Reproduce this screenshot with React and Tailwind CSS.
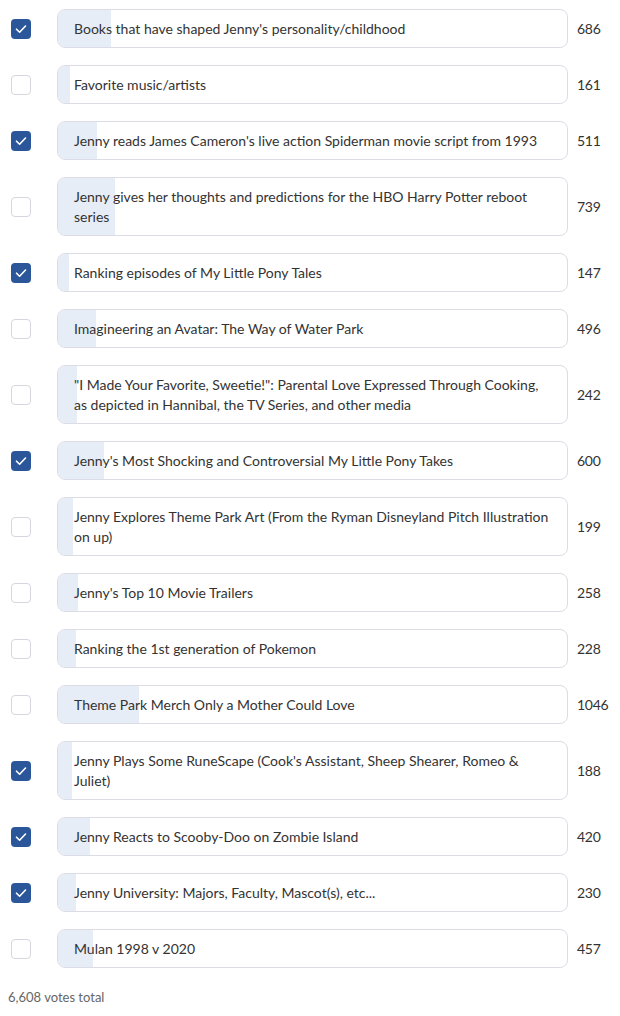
import React from "react";

const items = [
  { t: "Books that have shaped Jenny's personality/childhood", v: 686, c: true },
  { t: "Favorite music/artists", v: 161, c: false },
  { t: "Jenny reads James Cameron's live action Spiderman movie script from 1993", v: 511, c: true },
  { t: "Jenny gives her thoughts and predictions for the HBO Harry Potter reboot series", v: 739, c: false },
  { t: "Ranking episodes of My Little Pony Tales", v: 147, c: true },
  { t: "Imagineering an Avatar: The Way of Water Park", v: 496, c: false },
  { t: "\"I Made Your Favorite, Sweetie!\": Parental Love Expressed Through Cooking, as depicted in Hannibal, the TV Series, and other media", v: 242, c: false },
  { t: "Jenny's Most Shocking and Controversial My Little Pony Takes", v: 600, c: true },
  { t: "Jenny Explores Theme Park Art (From the Ryman Disneyland Pitch Illustration on up)", v: 199, c: false },
  { t: "Jenny's Top 10 Movie Trailers", v: 258, c: false },
  { t: "Ranking the 1st generation of Pokemon", v: 228, c: false },
  { t: "Theme Park Merch Only a Mother Could Love", v: 1046, c: false },
  { t: "Jenny Plays Some RuneScape (Cook's Assistant, Sheep Shearer, Romeo & Juliet)", v: 188, c: true },
  { t: "Jenny Reacts to Scooby-Doo on Zombie Island", v: 420, c: true },
  { t: "Jenny University: Majors, Faculty, Mascot(s), etc...", v: 230, c: true },
  { t: "Mulan 1998 v 2020", v: 457, c: false },
];

const total = items.reduce((s, i) => s + i.v, 0);

function Check({ on }) {
  if (on) {
    return (
      <div className="w-5 h-5 shrink-0 rounded-[4px] bg-[#2b579a] flex items-center justify-center">
        <svg width="14" height="14" viewBox="0 0 14 14" fill="none">
          <polyline points="2.5,7.2 5.6,10.2 11.5,4" stroke="white" strokeWidth="1.6" strokeLinecap="round" strokeLinejoin="round" />
        </svg>
      </div>
    );
  }
  return <div className="w-5 h-5 shrink-0 rounded-[4px] border border-[#d6d6de] bg-white" />;
}

export default function App() {
  return (
    <div className="bg-white w-[620px] min-h-[1016px] pt-[9px] text-[#333333]" style={{ fontFamily: "'Lato', 'Noto Sans', sans-serif" }}>
      <div className="flex flex-col gap-[17px]">
        {items.map((it, i) => (
          <div key={i} className="flex items-center">
            <div className="ml-[11px]">
              <Check on={it.c} />
            </div>
            <div className="ml-[26px] w-[511px] shrink-0 relative overflow-hidden rounded-lg border border-[#dcdce6] bg-white">
              <div className="absolute inset-y-0 left-0 bg-[#e7edf6]" style={{ width: `${(it.v / total) * 100}%` }} />
              <div className="relative px-4 py-[8.5px] text-[14px] leading-[20px]">{it.t}</div>
            </div>
            <div className="ml-[9px] text-[14px] tracking-[-0.3px]">{it.v}</div>
          </div>
        ))}
      </div>
      <div className="pl-2 mt-[20px] text-[13px] text-[#666666]">{total.toLocaleString("en-US")} votes total</div>
    </div>
  );
}
